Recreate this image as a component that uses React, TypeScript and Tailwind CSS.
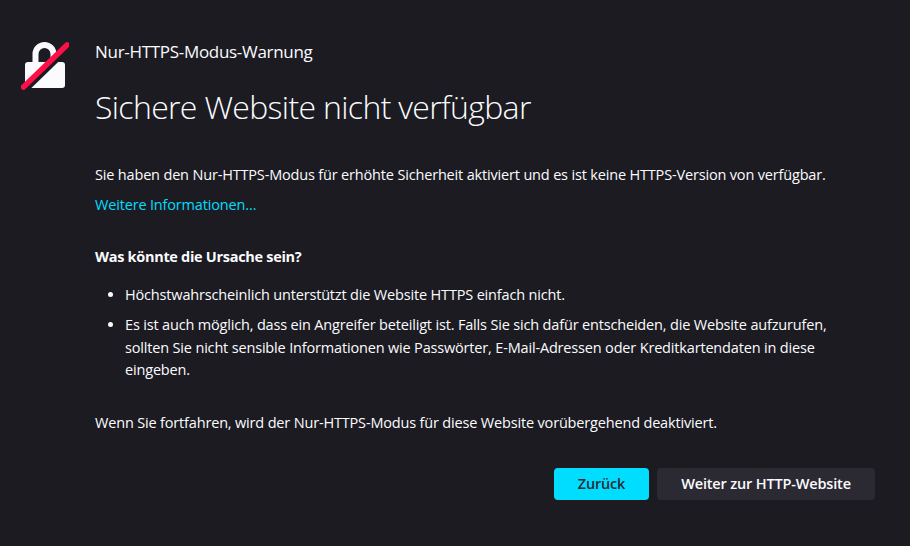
export default function App() {
  return (
    <div className="w-[910px] h-[546px] overflow-hidden bg-[#1c1b22] text-[#fbfbfe] text-[14.5px] leading-[22.5px] tracking-[-0.17px] flex gap-[26px] pl-[21px] pt-[40px] font-['Open_Sans',sans-serif]">
      <svg width="48" height="52" viewBox="0 0 48 52" className="shrink-0">
        <path fill="#fbfbfe" d="M11.5 24v-10a12 12 0 0 1 24 0v10h-6v-10a6 6 0 0 0-12 0v10z" />
        <path fill="#fbfbfe" d="M4 25a3 3 0 0 1 3-3h34a3 3 0 0 1 3 3v20a3 3 0 0 1-3 3H7a3 3 0 0 1-3-3z" />
        <path d="M2.5 47 L46 5" stroke="#1c1b22" strokeWidth="8" transform="translate(1.5 1.5)" />
        <path d="M2.5 47 L46 5" stroke="#ff0f47" strokeWidth="5.5" strokeLinecap="round" />
      </svg>
      <main className="w-[780px] flex flex-col">
        <p className="text-[17px] leading-[24px] tracking-[-0.3px]">Nur-HTTPS-Modus-Warnung</p>
        <h1 className="text-[32px] leading-[42px] font-light tracking-[-0.66px] mt-[22px]">Sichere Website nicht verfügbar</h1>
        <p className="mt-[36px]">Sie haben den Nur-HTTPS-Modus für erhöhte Sicherheit aktiviert und es ist keine HTTPS-Version von verfügbar.</p>
        <a className="mt-[7px] text-[#00ddff]">Weitere Informationen…</a>
        <p className="mt-[30px] font-bold tracking-[-0.3px]">Was könnte die Ursache sein?</p>
        <ul className="mt-[15px] ml-[30px] w-[720px] list-disc flex flex-col gap-[8px]">
          <li>Höchstwahrscheinlich unterstützt die Website HTTPS einfach nicht.</li>
          <li>Es ist auch möglich, dass ein Angreifer beteiligt ist. Falls Sie sich dafür entscheiden, die Website aufzurufen, sollten Sie nicht sensible Informationen wie Passwörter, E-Mail-Adressen oder Kreditkartendaten in diese eingeben.</li>
        </ul>
        <p className="mt-[30px]">Wenn Sie fortfahren, wird der Nur-HTTPS-Modus für diese Website vorübergehend deaktiviert.</p>
        <div className="mt-[34px] flex justify-end gap-[8px]">
          <button className="w-[95px] h-[32px] rounded-[4px] bg-[#00ddff] text-[#2b2a33] font-semibold">Zurück</button>
          <button className="w-[218px] h-[32px] rounded-[4px] bg-[#2b2a33] font-semibold">Weiter zur HTTP-Website</button>
        </div>
      </main>
    </div>
  );
}
